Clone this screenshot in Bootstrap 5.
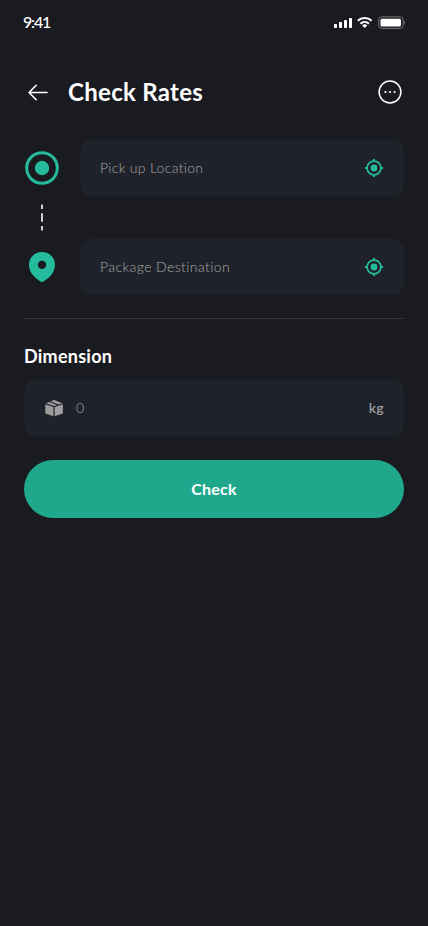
<!DOCTYPE html>
<html lang="en">
<head>
<meta charset="utf-8">
<meta name="viewport" content="width=device-width, initial-scale=1">
<title>Check Rates</title>
<link href="https://cdn.jsdelivr.net/npm/bootstrap@5.3.0/dist/css/bootstrap.min.css" rel="stylesheet">
<style>
body{background:#1a1b20;color:#fff;font-family:Lato,"Open Sans",sans-serif;font-size:14px;line-height:20px}
svg{display:block;flex:none}
.status{height:44px;padding:1px 22px 0 23px}
.clock{font-size:16px;font-weight:500;letter-spacing:-1.200px;margin-top:-2px}
.topbar{height:48px;margin-top:24px}
.title{font-size:24px;font-weight:700;line-height:29px;letter-spacing:.300px;padding-bottom:2px}
.route{margin-top:24px;gap:20px}
.stops{width:36px;padding-top:10px}
.fields{gap:43px}
.field{height:56px;background:#1f222a;border-radius:12px;padding:0 20px}
.field input{background:transparent;border:0;outline:0;color:#9e9e9e;padding:0;min-width:0;font-weight:300}
.field input::placeholder{color:#a8a8a8;opacity:1}
.pickup{letter-spacing:.310px}
.dest{letter-spacing:.410px}
.unit{color:#9e9e9e;font-weight:600;letter-spacing:.300px}
.rule{height:1px;background:#35383f;margin-top:23px}
.dim{font-size:18px;font-weight:700;line-height:22px;margin:26px 0 13px;letter-spacing:.250px}
.check{height:58px;background:#1fa88b;color:#fff;font-size:16px;font-weight:700;letter-spacing:.250px;margin-top:24px}
.check:hover{background:#1b987e;color:#fff}
</style>
</head>
<body>
<div class="status d-flex align-items-center justify-content-between">
<div class="clock">9:41</div>
<svg width="72" height="14" viewBox="0 0 72 14" fill="#fff">
<rect x="0" y="8" width="3" height="4" rx=".7"/><rect x="5" y="6" width="3" height="6" rx=".7"/><rect x="10" y="4" width="3" height="8" rx=".7"/><rect x="15" y="2" width="3" height="10" rx=".7"/>
<g fill="none" stroke="#fff" stroke-width="2.100"><path d="M23.800 4.700a10 10 0 0 1 13.800 0"/><path d="M26.500 7.700a6.200 6.200 0 0 1 8.400 0"/></g><path d="M33.200 9.400a3.800 3.800 0 0 0-5 0l2.500 2.700z"/>
<rect x="44.700" y=".900" width="24.500" height="11.500" rx="3" fill="none" stroke="#76777a"/><rect x="46.500" y="2.700" width="20.500" height="7.800" rx="1.500"/><path d="M70.300 5v3.400c1.200-.6 1.200-2.800 0-3.400z" fill="#76777a"/>
</svg>
</div>
<main class="px-4">
<header class="topbar d-flex align-items-center">
<svg width="28" height="28" viewBox="0 0 28 28" fill="none" stroke="#fff" stroke-width="1.600" stroke-linecap="round" stroke-linejoin="round"><path d="M23 14.500H5M12.200 7.300 5 14.500l7.200 7.200"/></svg>
<h1 class="title mb-0 ms-3">Check Rates</h1>
<svg class="ms-auto" width="28" height="28" viewBox="0 0 28 28"><circle cx="14" cy="14" r="10.900" fill="none" stroke="#fff" stroke-width="1.500"/><g fill="#fff"><circle cx="9.400" cy="14" r="1.100"/><circle cx="14" cy="14" r="1.100"/><circle cx="18.600" cy="14" r="1.100"/></g></svg>
</header>
<section class="route d-flex">
<div class="stops">
<svg width="36" height="136" viewBox="0 0 36 136"><circle cx="18" cy="18" r="15.300" fill="none" stroke="#24bc9c" stroke-width="3"/><circle cx="18" cy="18" r="7.200" fill="#24bc9c"/><path d="M18 54.500v4.500M18 63.300v8.500M18 76v4.500" stroke="#d0d0d0" stroke-width="2"/><path fill="#24bc9c" fill-rule="evenodd" d="M18 102C10.800 102 5 107.600 5 114.700C5 119.600 7.200 123.200 10 126.300C12.500 129 14.900 130.700 17 131.800Q18 132.300 19 131.800C21.100 130.700 23.500 129 26 126.300C28.800 123.200 31 119.600 31 114.700C31 107.600 25.200 102 18 102zM18 110.700a4.200 4.200 0 1 1 0 8.400 4.200 4.200 0 0 1 0-8.400z"/></svg>
</div>
<div class="fields d-flex flex-column flex-grow-1">
<label class="field d-flex align-items-center"><input class="pickup flex-grow-1" placeholder="Pick up Location">
<svg width="20" height="20" viewBox="0 0 20 20" fill="none" stroke="#24bc9c" stroke-width="1.700"><circle cx="10" cy="10" r="6.900"/><path d="M10 1v2.500M10 16.500V19M1 10h2.500M16.500 10H19" stroke-width="2"/><circle cx="10" cy="10" r="3.400" fill="#24bc9c" stroke="none"/></svg></label>
<label class="field d-flex align-items-center"><input class="dest flex-grow-1" placeholder="Package Destination">
<svg width="20" height="20" viewBox="0 0 20 20" fill="none" stroke="#24bc9c" stroke-width="1.700"><circle cx="10" cy="10" r="6.900"/><path d="M10 1v2.500M10 16.500V19M1 10h2.500M16.500 10H19" stroke-width="2"/><circle cx="10" cy="10" r="3.400" fill="#24bc9c" stroke="none"/></svg></label>
</div>
</section>
<div class="rule"></div>
<h2 class="dim">Dimension</h2>
<label class="field d-flex align-items-center">
<svg width="20" height="20" viewBox="0 0 20 20" fill="#9e9e9e"><path d="M1.300 6.300 9.400 9v9.200L2.100 15.700q-.8-.3-.8-1.200zM18.900 6.300 10.600 9v9.200l7.500-2.500q.8-.3.800-1.200zM2 5.200 5.100 4l8 2.900L10 8zM6.500 3.400 9.300 2.200q.8-.3 1.600 0L18.300 5.200 14.800 6.400z"/></svg>
<input class="flex-grow-1 ms-2 ps-1" placeholder="0"><span class="unit">kg</span></label>
<button class="check btn w-100 rounded-pill border-0" type="button">Check</button>
</main>
<script src="https://cdn.jsdelivr.net/npm/bootstrap@5.3.0/dist/js/bootstrap.bundle.min.js"></script>
</body>
</html>
